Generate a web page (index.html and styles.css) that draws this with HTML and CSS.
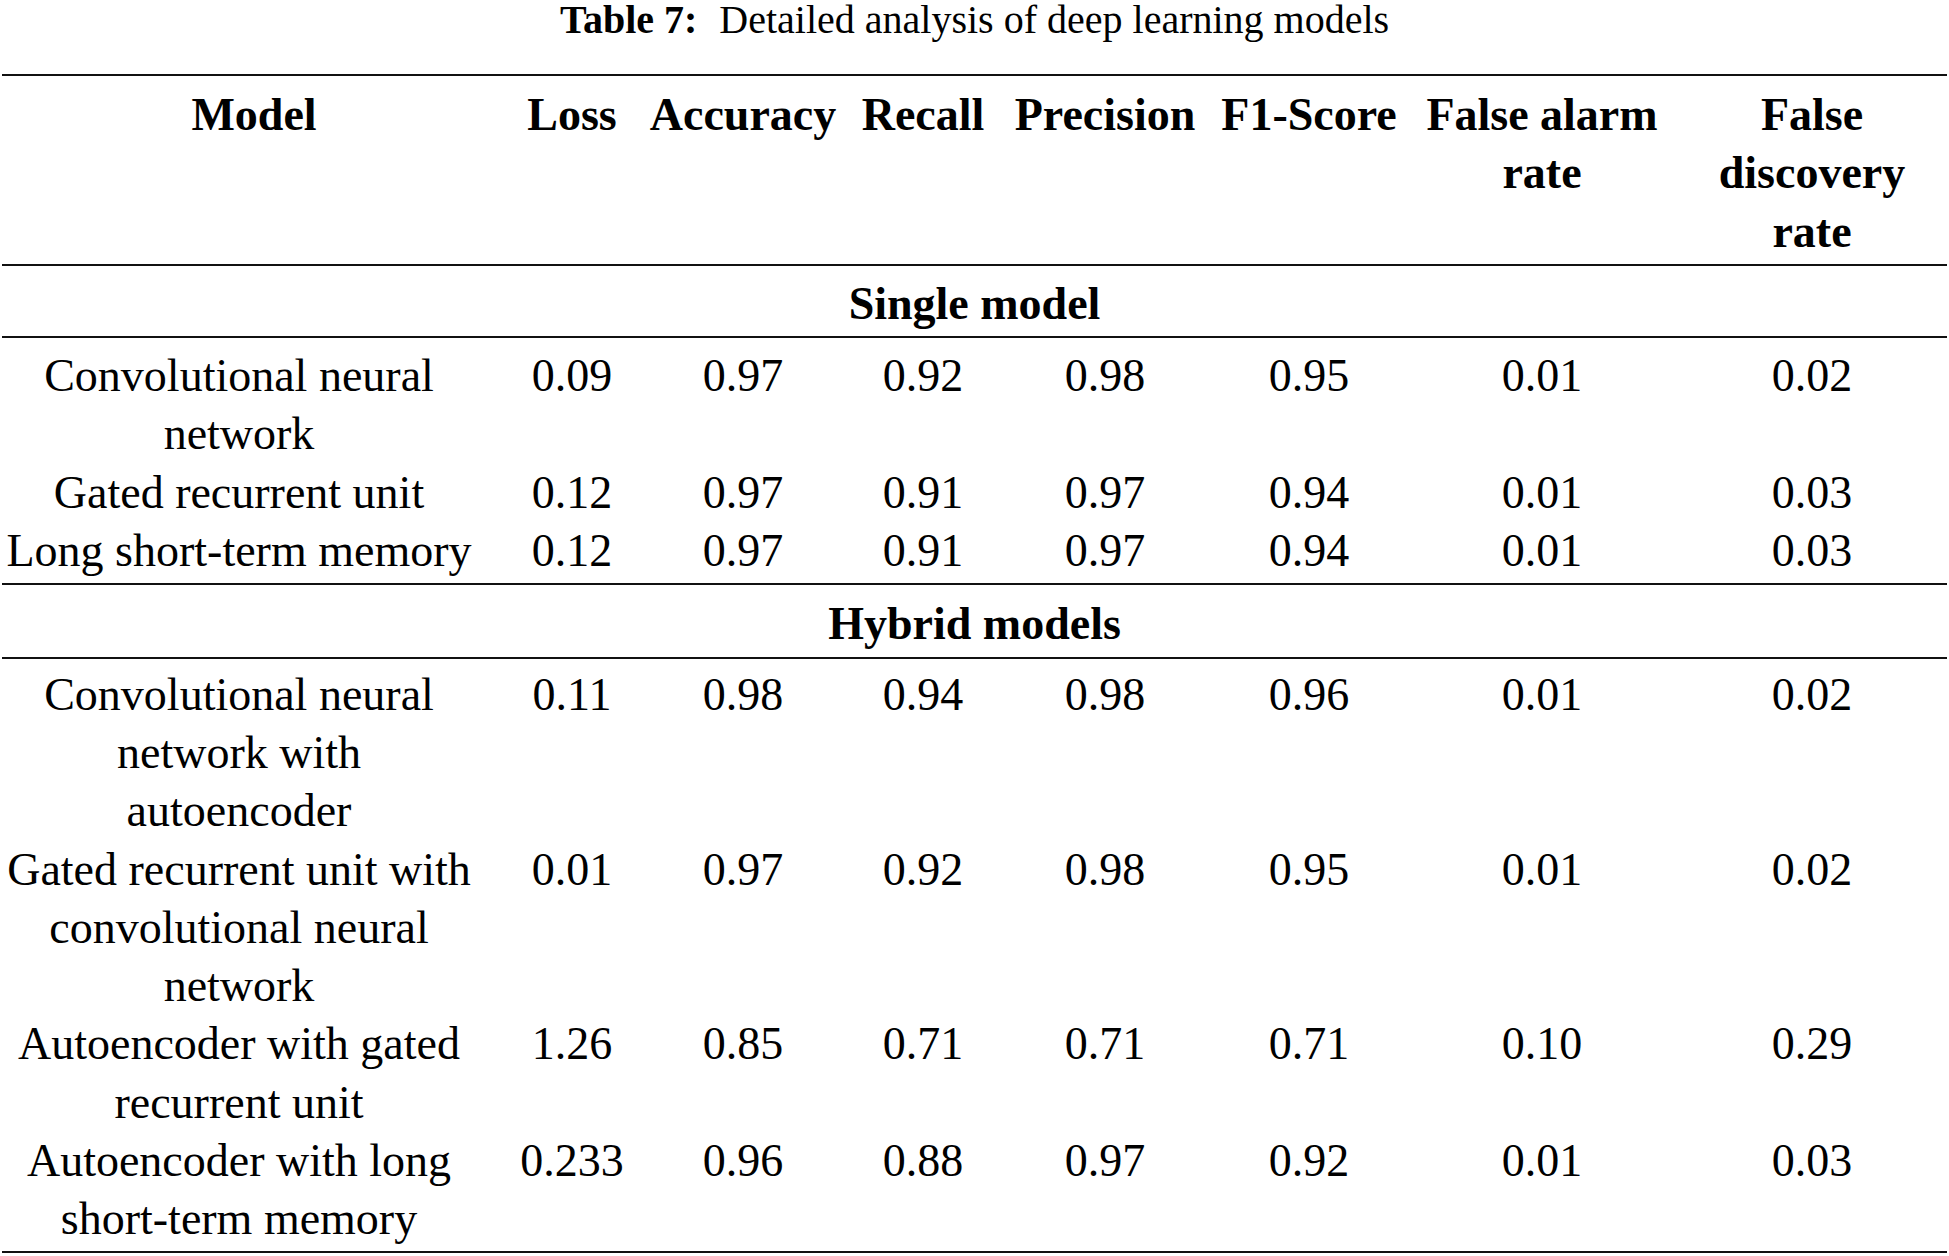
FILE: index.html
```html
<!DOCTYPE html>
<html lang="en">
<head>
<meta charset="utf-8">
<title>Table 7</title>
<link rel="stylesheet" href="styles.css">
</head>
<body>
<div class="caption"><b>Table 7:</b><span class="gap"></span>Detailed analysis of deep learning models</div>
<div class="tbl">
  <div class="row head">
    <div class="cell first">Model</div>
    <div class="cell">Loss</div>
    <div class="cell">Accuracy</div>
    <div class="cell">Recall</div>
    <div class="cell">Precision</div>
    <div class="cell">F1-Score</div>
    <div class="cell">False alarm<br>rate</div>
    <div class="cell last">False<br>discovery<br>rate</div>
  </div>
  <div class="section">Single model</div>
  <div class="group g1">
    <div class="row">
      <div class="cell first">Convolutional neural network</div>
      <div class="cell">0.09</div><div class="cell">0.97</div><div class="cell">0.92</div><div class="cell">0.98</div><div class="cell">0.95</div><div class="cell">0.01</div><div class="cell last">0.02</div>
    </div>
    <div class="row">
      <div class="cell first">Gated recurrent unit</div>
      <div class="cell">0.12</div><div class="cell">0.97</div><div class="cell">0.91</div><div class="cell">0.97</div><div class="cell">0.94</div><div class="cell">0.01</div><div class="cell last">0.03</div>
    </div>
    <div class="row">
      <div class="cell first">Long short-term memory</div>
      <div class="cell">0.12</div><div class="cell">0.97</div><div class="cell">0.91</div><div class="cell">0.97</div><div class="cell">0.94</div><div class="cell">0.01</div><div class="cell last">0.03</div>
    </div>
  </div>
  <div class="section s2">Hybrid models</div>
  <div class="group g2">
    <div class="row">
      <div class="cell first">Convolutional neural network with autoencoder</div>
      <div class="cell">0.11</div><div class="cell">0.98</div><div class="cell">0.94</div><div class="cell">0.98</div><div class="cell">0.96</div><div class="cell">0.01</div><div class="cell last">0.02</div>
    </div>
    <div class="row">
      <div class="cell first">Gated recurrent unit with convolutional neural network</div>
      <div class="cell">0.01</div><div class="cell">0.97</div><div class="cell">0.92</div><div class="cell">0.98</div><div class="cell">0.95</div><div class="cell">0.01</div><div class="cell last">0.02</div>
    </div>
    <div class="row">
      <div class="cell first">Autoencoder with gated recurrent unit</div>
      <div class="cell">1.26</div><div class="cell">0.85</div><div class="cell">0.71</div><div class="cell">0.71</div><div class="cell">0.71</div><div class="cell">0.10</div><div class="cell last">0.29</div>
    </div>
    <div class="row">
      <div class="cell first">Autoencoder with long short-term memory</div>
      <div class="cell">0.233</div><div class="cell">0.96</div><div class="cell">0.88</div><div class="cell">0.97</div><div class="cell">0.92</div><div class="cell">0.01</div><div class="cell last">0.03</div>
    </div>
  </div>
</div>
</body>
</html>
```
FILE: styles.css
```css
html, body {
  margin: 0;
  padding: 0;
  background: #ffffff;
}
body {
  font-family: "Liberation Serif", "Times New Roman", serif;
  color: #000;
  width: 1949px;
}
.caption {
  font-size: 40px;
  line-height: 40px;
  text-align: center;
  margin: 0 0 34px 0;
  white-space: nowrap;
}
.caption .gap {
  display: inline-block;
  width: 22px;
}
.tbl {
  margin: 0 2px;
  border-top: 2px solid #111;
  border-bottom: 2px solid #111;
  font-size: 46px;
  line-height: 58.3px;
}
.row {
  display: grid;
  grid-template-columns: 518px 104px 238px 122px 242px 166px 300px 255px;
}
.cell {
  display: flex;
  flex-direction: column;
  align-items: center;
  text-align: center;
}
.cell.first {
  padding-right: 44px;
}
.cell.last {
  padding-right: 15px;
}
.head {
  font-weight: bold;
  white-space: nowrap;
  padding: 10px 0 3px 0;
  border-bottom: 2px solid #111;
}
.head .cell.first {
  padding-right: 14px;
}
.section {
  font-weight: bold;
  text-align: center;
  padding: 9px 0 3px 0;
  border-bottom: 2px solid #111;
}
.section.s2 {
  padding: 10px 0 3px 0;
}
.group.g1 {
  padding: 9px 0 3px 0;
  border-bottom: 2px solid #111;
}
.group.g2 {
  padding: 7px 0 2px 0;
}
```
